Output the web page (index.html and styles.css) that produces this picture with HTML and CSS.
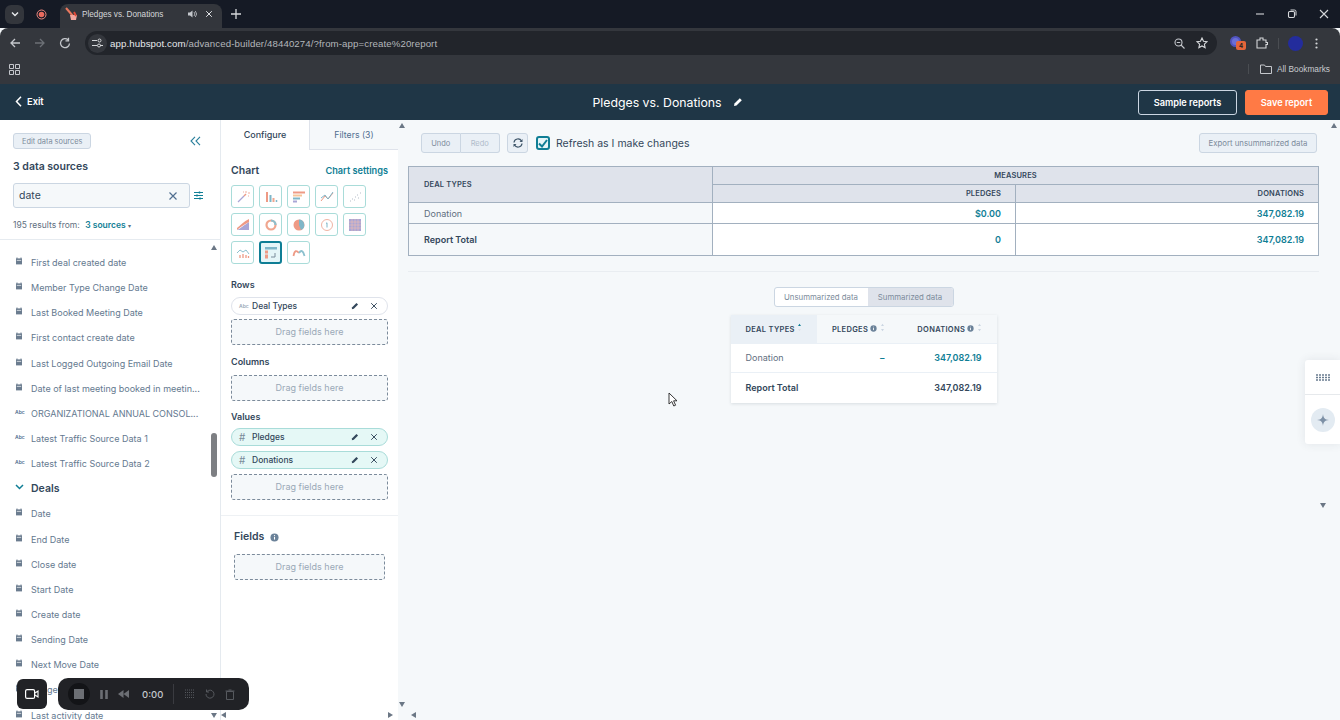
FILE: index.html
```html
<!DOCTYPE html>
<html lang="en">
<head>
<meta charset="utf-8">
<title>Pledges vs. Donations</title>
<link rel="stylesheet" href="styles.css">
</head>
<body>
<svg class="defs" width="0" height="0">
  <defs>
    <symbol id="cal" viewBox="0 0 8 8"><path d="M1 1.400h6v6H1z" fill="#6b7c8f"/><path d="M2 .5v1.400M6 .5v1.400" stroke="#6b7c8f"/><path d="M1.800 3.400h4.400" stroke="#e6eaee" stroke-width=".8"/></symbol>
    <symbol id="x" viewBox="0 0 10 10"><path d="M1.500 1.500l7 7M8.500 1.500l-7 7" stroke="currentColor" stroke-width="1.200" fill="none"/></symbol>
    <symbol id="pen" viewBox="0 0 10 10"><path d="M1 9l.5-2.500L6.800 1.200l2 2L3.500 8.500z" fill="currentColor"/></symbol>
    <symbol id="info" viewBox="0 0 10 10"><circle cx="5" cy="5" r="4.500" fill="#6b8299"/><path d="M5 4.300v3" stroke="#fff" stroke-width="1.200"/><circle cx="5" cy="2.800" r=".7" fill="#fff"/></symbol>
    <symbol id="sort" viewBox="0 0 6 12"><path d="M3 1l2 3H1zM3 11L1 8h4z" fill="#cbd6e2"/></symbol>
  </defs>
</svg>

<div class="tabstrip">
  <span class="tab-menu"><svg width="8" height="6" viewBox="0 0 8 6"><path d="M1 1.500l3 3 3-3" stroke="#e8eaed" stroke-width="1.400" fill="none"/></svg></span>
  <svg class="rec-dot" width="11" height="11" viewBox="0 0 11 11"><circle cx="5.500" cy="5.500" r="4.500" fill="none" stroke="#f28b82"/><circle cx="5.500" cy="5.500" r="2.800" fill="#ea6a5e"/></svg>
  <div class="tab">
    <svg width="14" height="14" viewBox="0 0 14 14"><path d="M1 1l7 8" stroke="#e9785f" stroke-width="2"/><path d="M5 8h7l-1 5H6z" fill="#f2a7a0"/><path d="M9 5l2 4" stroke="#e24b3a" stroke-width="2"/></svg>
    <span class="tab-title">Pledges vs. Donations</span>
    <svg class="tab-sound" width="10" height="10" viewBox="0 0 10 10"><path d="M1 3.500h2L5.500 1.500v7L3 6.500H1z" fill="#c4c7cc"/><path d="M7 3a3 3 0 0 1 0 4M8.300 2a4.500 4.500 0 0 1 0 6" stroke="#c4c7cc" stroke-width=".8" fill="none"/></svg>
    <svg class="tab-close" width="8" height="8"><use href="#x"/></svg>
  </div>
  <svg class="tab-new" width="10" height="10" viewBox="0 0 10 10"><path d="M5 0v10M0 5h10" stroke="#d5d7da" stroke-width="1.300"/></svg>
  <div class="window-controls">
    <svg width="10" height="10" viewBox="0 0 10 10"><path d="M1 5h8" stroke="#d5d7da" stroke-width="1.100"/></svg>
    <svg width="10" height="10" viewBox="0 0 10 10"><rect x="1.500" y="2.500" width="6" height="6" rx="1.200" fill="none" stroke="#d5d7da" stroke-width="1.100"/><path d="M3.500 1h4a1.500 1.500 0 0 1 1.500 1.500v4" fill="none" stroke="#d5d7da"/></svg>
    <svg width="10" height="10" viewBox="0 0 10 10"><path d="M1 1l8 8M9 1L1 9" stroke="#d5d7da" stroke-width="1.100"/></svg>
  </div>
</div>

<div class="toolbar">
  <svg class="tb-ic" width="12" height="12" viewBox="0 0 12 12"><path d="M11 6H2M6 2L2 6l4 4" stroke="#c4c7cc" stroke-width="1.300" fill="none"/></svg>
  <svg class="tb-ic" width="12" height="12" viewBox="0 0 12 12"><path d="M1 6h9M6 2l4 4-4 4" stroke="#6c7076" stroke-width="1.300" fill="none"/></svg>
  <svg class="tb-ic" width="12" height="12" viewBox="0 0 12 12"><path d="M10.500 6.500A4.500 4.500 0 1 1 9 2.800M9.500 .8v3h-3" stroke="#c4c7cc" stroke-width="1.300" fill="none"/></svg>
  <div class="omnibox">
    <span class="site-ic"><svg width="11" height="10" viewBox="0 0 11 10"><path d="M0 2.500h5M8 7.500h3M0 7.500h5" stroke="#d5d7da"/><circle cx="7.500" cy="2.500" r="1.500" fill="none" stroke="#d5d7da"/><circle cx="7" cy="7.500" r="1.500" fill="none" stroke="#d5d7da"/></svg></span>
    <span class="url">app.hubspot.com<span class="url-dim">/advanced-builder/48440274/?from-app=create%20report</span></span>
    <span class="omni-right">
      <svg width="11" height="11" viewBox="0 0 11 11"><circle cx="4.500" cy="4.500" r="3.500" fill="none" stroke="#c4c7cc" stroke-width="1.100"/><path d="M7 7l3.500 3.500M2.800 4.500h3.400" stroke="#c4c7cc" stroke-width="1.100"/></svg>
      <svg width="12" height="12" viewBox="0 0 12 12"><path d="M6 1l1.500 3.300 3.500.4-2.600 2.400.7 3.500L6 8.900l-3.100 1.700.7-3.500L1 4.700l3.500-.4z" fill="none" stroke="#d5d7da" stroke-width="1.100"/></svg>
    </span>
  </div>
  <div class="ext">
    <span class="ext-badge-wrap"><span class="ext-round"></span><span class="ext-badge">4</span></span>
    <svg width="12" height="12" viewBox="0 0 12 12"><path d="M1 3h3V1h3v2h3v2.500h1.500v2H10V11H1z" fill="none" stroke="#d5d7da" stroke-width="1.100"/></svg>
    <span class="ext-sep"></span>
    <span class="avatar"></span>
    <svg width="3" height="11" viewBox="0 0 3 11"><circle cx="1.500" cy="1.500" r="1.100" fill="#d5d7da"/><circle cx="1.500" cy="5.500" r="1.100" fill="#d5d7da"/><circle cx="1.500" cy="9.500" r="1.100" fill="#d5d7da"/></svg>
  </div>
</div>

<div class="bookmarks">
  <svg width="11" height="11" viewBox="0 0 11 11"><path d="M.5.500h4v4h-4zM6.500.500h4v4h-4zM.5 6.500h4v4h-4zM6.500 6.500h4v4h-4z" fill="none" stroke="#c4c7cc"/></svg>
  <span class="bm-right">
    <span class="bm-sep"></span>
    <svg width="12" height="10" viewBox="0 0 12 10"><path d="M.5 1h4l1 1.500h6v7H.5z" fill="none" stroke="#c4c7cc"/></svg>
    <span>All Bookmarks</span>
  </span>
</div>

<header class="appbar">
  <a class="exit"><svg width="7" height="11" viewBox="0 0 7 11"><path d="M6 .8L1.500 5.500 6 10.200" stroke="#fff" stroke-width="1.500" fill="none"/></svg>Exit</a>
  <div class="report-title">Pledges vs. Donations
    <svg width="10" height="10" class="title-pen"><use href="#pen"/></svg>
  </div>
  <div class="appbar-actions">
    <button class="btn-outline">Sample reports</button>
    <button class="btn-save">Save report</button>
  </div>
</header>

<main class="builder">
  <aside class="sources">
    <div class="sources-head">
      <div class="edit-row">
        <button class="btn-mini">Edit data sources</button>
        <svg width="11" height="10" viewBox="0 0 11 10"><path d="M5 .8L1 5l4 4.200M10 .8L6 5l4 4.200" stroke="#2a7f9c" stroke-width="1.100" fill="none"/></svg>
      </div>
      <h2 class="sources-count">3 data sources</h2>
      <div class="search-row">
        <div class="search"><span>date</span><svg width="10" height="10" class="search-x"><use href="#x"/></svg></div>
        <svg width="9" height="9" viewBox="0 0 9 9"><path d="M0 1.500h9M0 4.500h9M0 7.500h9" stroke="#0f7e95"/><path d="M5.500.5v2M3 3.500v2M6 6.500v2" stroke="#0f7e95" stroke-width="1.400"/></svg>
      </div>
      <div class="results">195 results from: <b>3 sources</b> <span class="caret">▾</span></div>
    </div>
    <div class="field-list">
      <ul>
        <li><svg width="8" height="8"><use href="#cal"/></svg>First deal created date</li>
        <li><svg width="8" height="8"><use href="#cal"/></svg>Member Type Change Date</li>
        <li><svg width="8" height="8"><use href="#cal"/></svg>Last Booked Meeting Date</li>
        <li><svg width="8" height="8"><use href="#cal"/></svg>First contact create date</li>
        <li><svg width="8" height="8"><use href="#cal"/></svg>Last Logged Outgoing Email Date</li>
        <li><svg width="8" height="8"><use href="#cal"/></svg>Date of last meeting booked in meetin...</li>
        <li><span class="abc">Abc</span>ORGANIZATIONAL ANNUAL CONSOL...</li>
        <li><span class="abc">Abc</span>Latest Traffic Source Data 1</li>
        <li><span class="abc">Abc</span>Latest Traffic Source Data 2</li>
        <li class="group"><svg width="9" height="6" viewBox="0 0 9 6"><path d="M1 1l3.500 3.500L8 1" stroke="#0f7e95" stroke-width="1.500" fill="none"/></svg>Deals</li>
        <li><svg width="8" height="8"><use href="#cal"/></svg>Date</li>
        <li><svg width="8" height="8"><use href="#cal"/></svg>End Date</li>
        <li><svg width="8" height="8"><use href="#cal"/></svg>Close date</li>
        <li><svg width="8" height="8"><use href="#cal"/></svg>Start Date</li>
        <li><svg width="8" height="8"><use href="#cal"/></svg>Create date</li>
        <li><svg width="8" height="8"><use href="#cal"/></svg>Sending Date</li>
        <li><svg width="8" height="8"><use href="#cal"/></svg>Next Move Date</li>
        <li><svg width="8" height="8"><use href="#cal"/></svg>Lodge Date</li>
        <li><svg width="8" height="8"><use href="#cal"/></svg>Last activity date</li>
      </ul>
      <span class="arrow up list-up"></span>
      <span class="list-thumb"></span>
      <span class="arrow down list-down"></span>
    </div>
  </aside>

  <section class="config">
    <div class="config-panel">
      <div class="tabs"><div class="tab-active">Configure</div><div class="tab-idle">Filters (3)</div></div>
      <div class="config-body">
        <div class="chart-head"><h3>Chart</h3><a>Chart settings</a></div>
        <div class="chart-grid">
          <span class="ct"><svg width="14" height="14" viewBox="0 0 14 14"><path d="M2 12l6-6" stroke="#a9a6d6" stroke-width="1.300"/><path d="M8 6l2-2" stroke="#ee9a85" stroke-width="1.500"/><path d="M10 1v2M12 3h2M12 6h1M7 2h1" stroke="#ee9a85" stroke-width=".8"/></svg></span>
          <span class="ct"><svg width="14" height="14" viewBox="0 0 14 14"><path d="M3 2v10" stroke="#ee9a85" stroke-width="2"/><path d="M6.500 5v7" stroke="#7fb6c8" stroke-width="2"/><path d="M9.500 8v4" stroke="#f0a68f" stroke-width="2"/><path d="M12.500 10v2" stroke="#7fb6c8" stroke-width="1.500"/></svg></span>
          <span class="ct"><svg width="14" height="14" viewBox="0 0 14 14"><path d="M1 2.500h12" stroke="#ee9a85" stroke-width="2"/><path d="M1 5.500h9" stroke="#f6c69a" stroke-width="2"/><path d="M1 8.500h7" stroke="#7fb6c8" stroke-width="2"/><path d="M1 11.500h4" stroke="#a9a6d6" stroke-width="2"/></svg></span>
          <span class="ct"><svg width="14" height="14" viewBox="0 0 14 14"><path d="M1 11l4-5 3 3 5-6" stroke="#ee9a85" fill="none"/><path d="M1 8l4-3 3 4 5-7" stroke="#7fb6c8" fill="none"/></svg></span>
          <span class="ct"><svg width="14" height="14" viewBox="0 0 14 14"><path d="M2 11h1M4 9h1M6 10h1M7 7h1M9 5h1M10 8h1M12 3h1" stroke="#b5bdc8" stroke-dasharray="1 1"/></svg></span>
          <span class="ct"><svg width="14" height="14" viewBox="0 0 14 14"><path d="M1 12c3-1 7-5 12-8v8z" fill="#a9a6d6"/><path d="M1 10c3-2 7-7 12-9v3C8 7 4 9 1 12z" fill="#ee9a85"/></svg></span>
          <span class="ct"><svg width="14" height="14" viewBox="0 0 14 14"><circle cx="7" cy="7" r="4.500" fill="none" stroke="#f0a68f" stroke-width="2.200"/><path d="M7 2.500A4.500 4.500 0 0 1 11.500 7" fill="none" stroke="#8cc0ce" stroke-width="2.200"/></svg></span>
          <span class="ct"><svg width="14" height="14" viewBox="0 0 14 14"><circle cx="7" cy="7" r="5.500" fill="#ee9a85"/><path d="M7 7V1.500A5.500 5.500 0 0 1 9 12z" fill="#7fb6c8"/></svg></span>
          <span class="ct"><svg width="14" height="14" viewBox="0 0 14 14"><circle cx="7" cy="7" r="5.500" fill="none" stroke="#f0b4a4"/><path d="M6 5.500L7 4.800V9.500" stroke="#7fb6c8" fill="none"/></svg></span>
          <span class="ct"><svg width="14" height="14" viewBox="0 0 14 14"><rect x="1" y="1" width="12" height="12" fill="#a9a6d6"/><path d="M1 4h12M1 7h12M1 10h12M4 1v12M7 1v12M10 1v12" stroke="#f3c0b0" stroke-width=".6"/></svg></span>
          <span class="ct"><svg width="14" height="14" viewBox="0 0 14 14"><path d="M1 7l3-3 3 2 3-2 3 4" stroke="#8cc0ce" fill="none"/><path d="M4 12v-3M7 12V8M10 12V9M12.500 12v-2" stroke="#ee9a85" stroke-width="1.300"/></svg></span>
          <span class="ct ct-on"><svg width="14" height="14" viewBox="0 0 14 14"><rect x="1" y="1" width="12" height="2.500" fill="#7fb6c8"/><rect x="1" y="4.500" width="3" height="3" fill="#ee9a85"/><rect x="1" y="8.500" width="3" height="4" fill="#ee9a85"/><path d="M7 11h4V7" stroke="#7a8b9a" fill="none"/></svg></span>
          <span class="ct"><svg width="14" height="14" viewBox="0 0 14 14"><path d="M1.500 10c1-6 3-6 5.500-3" stroke="#ee9a85" stroke-width="1.800" fill="none"/><path d="M7 7c2-3 4-3 5.500 3" stroke="#8cc0ce" stroke-width="1.800" fill="none"/></svg></span>
        </div>

        <h4>Rows</h4>
        <div class="pill"><span class="abc pill-ic">Abc</span><span class="pill-name">Deal Types</span><svg width="8" height="8"><use href="#pen"/></svg><svg width="8" height="8"><use href="#x"/></svg></div>
        <div class="drop">Drag fields here</div>

        <h4 class="h-columns">Columns</h4>
        <div class="drop">Drag fields here</div>

        <h4 class="h-values">Values</h4>
        <div class="pill pill-val"><span class="pill-ic hash">#</span><span class="pill-name">Pledges</span><svg width="8" height="8"><use href="#pen"/></svg><svg width="8" height="8"><use href="#x"/></svg></div>
        <div class="pill pill-val"><span class="pill-ic hash">#</span><span class="pill-name">Donations</span><svg width="8" height="8"><use href="#pen"/></svg><svg width="8" height="8"><use href="#x"/></svg></div>
        <div class="drop">Drag fields here</div>
      </div>
      <div class="fields-card">
        <h3>Fields <svg width="9" height="9"><use href="#info"/></svg></h3>
        <div class="drop">Drag fields here</div>
      </div>
    </div>
    <span class="arrow up cfg-up"></span>
    <span class="arrow down cfg-down"></span>
    <span class="arrow left cfg-left"></span>
    <span class="arrow right cfg-right"></span>
  </section>

  <section class="canvas">
    <div class="canvas-top">
      <div class="undo-group"><button>Undo</button><button class="redo">Redo</button></div>
      <button class="refresh"><svg width="10" height="10" viewBox="0 0 10 10"><path d="M1 4.500A4 4 0 0 1 8.500 3M9 5.500A4 4 0 0 1 1.500 7" stroke="#3e5569" stroke-width="1.200" fill="none"/><path d="M9.500 1v3h-3M.5 9V6h3" fill="#3e5569"/></svg></button>
      <span class="check"><svg width="10" height="9" viewBox="0 0 10 9"><path d="M1 4.500l3 3 5-6.500" stroke="#0f7e95" stroke-width="2" fill="none"/></svg></span>
      <span class="check-label">Refresh as I make changes</span>
      <button class="btn-export">Export unsummarized data</button>
    </div>

    <table class="pivot">
      <colgroup><col class="c1"><col class="c2"><col class="c3"></colgroup>
      <tr class="h1"><th rowspan="2" class="left">DEAL TYPES</th><th colspan="2" class="center">MEASURES</th></tr>
      <tr class="h2"><th>PLEDGES</th><th>DONATIONS</th></tr>
      <tr class="r1"><td class="left">Donation</td><td class="link">$0.00</td><td class="link">347,082.19</td></tr>
      <tr class="r2"><td class="left strong">Report Total</td><td class="link">0</td><td class="link">347,082.19</td></tr>
    </table>

    <div class="summary-zone">
      <div class="toggle"><span>Unsummarized data</span><span class="toggle-on">Summarized data</span></div>
      <table class="summary">
        <colgroup><col class="s1"><col class="s2"><col class="s3"></colgroup>
        <tr class="s-head">
          <th class="s-sorted">DEAL TYPES <svg width="5" height="9" viewBox="0 0 6 12"><path d="M3 1l2 3H1z" fill="#0f7e95"/><path d="M3 11L1 8h4z" fill="#dfe3eb"/></svg></th>
          <th class="num mid">PLEDGES <svg width="7" height="7"><use href="#info"/></svg> <svg width="5" height="9"><use href="#sort"/></svg></th>
          <th class="num">DONATIONS <svg width="7" height="7"><use href="#info"/></svg> <svg width="5" height="9"><use href="#sort"/></svg></th>
        </tr>
        <tr class="s-row"><td>Donation</td><td class="num mid link">–</td><td class="num link">347,082.19</td></tr>
        <tr class="s-row s-total"><td>Report Total</td><td class="num mid"></td><td class="num">347,082.19</td></tr>
      </table>
    </div>
    <svg class="cursor" width="10" height="15" viewBox="0 0 10 15"><path d="M1 1v11l2.800-2.500L5.800 14l1.800-.8-2-4.400H9z" fill="#fff" stroke="#222" stroke-width=".9"/></svg>
  </section>
</main>

<div class="side-widget">
  <div class="sw-top"><svg width="14" height="7" viewBox="0 0 14 7"><path d="M0 1h14M0 3.500h14M0 6h14" stroke="#6a7c90" stroke-width="1.500" stroke-dasharray="2 1"/></svg></div>
  <div class="sw-bot"><span class="sw-circle"><svg width="12" height="12" viewBox="0 0 12 12"><path d="M6 0c.5 4 1.500 5.500 6 6-4.500.5-5.500 2-6 6-.5-4-1.500-5.500-6-6 4.500-.5 5.500-2 6-6z" fill="#7d90a6"/></svg></span></div>
</div>
<span class="arrow up page-up"></span>
<span class="arrow down page-down"></span>
<span class="arrow left canvas-left"></span>

<div class="recorder">
  <div class="rec-cam"><svg width="14" height="10" viewBox="0 0 14 10"><rect x=".6" y=".6" width="9" height="8.800" rx="1.500" fill="none" stroke="#fff" stroke-width="1.200"/><path d="M10 4l3-2v6l-3-2" fill="none" stroke="#fff" stroke-width="1.100"/></svg></div>
  <div class="rec-bar">
    <span class="rec-stop"><i></i></span>
    <svg width="8" height="9" viewBox="0 0 8 9"><path d="M1.500 0v9M6.500 0v9" stroke="#6c6f74" stroke-width="2.600"/></svg>
    <svg width="11" height="8" viewBox="0 0 11 8"><path d="M5.500 0v8L0 4zM11 0v8L5.500 4z" fill="#6c6f74"/></svg>
    <span class="rec-time">0:00</span>
    <span class="rec-sep"></span>
    <svg width="11" height="11" viewBox="0 0 11 11"><path d="M1 1h9M1 3.500h9M1 6h9M1 8.500h9" stroke="#56595e" stroke-dasharray="1 1"/></svg>
    <svg width="10" height="10" viewBox="0 0 10 10"><path d="M2 2.500A4 4 0 1 1 1 5M1.500 .5v2.500H4" stroke="#56595e" fill="none"/></svg>
    <svg width="10" height="11" viewBox="0 0 10 11"><path d="M1.500 2.500h7v8h-7zM.5 2h9M3.500 1h3" stroke="#56595e" fill="none"/></svg>
  </div>
</div>
</body>
</html>
```
FILE: styles.css
```css
* { box-sizing: border-box; }
html, body { margin: 0; height: 720px; overflow: hidden; }
body { font-family: "Inter", "Liberation Sans", sans-serif; font-size: 9px; color: #33475b; background: #f5f8fa; position: relative; }
.defs { position: absolute; }
button { font-family: inherit; cursor: default; }
h2, h3, h4, ul { margin: 0; padding: 0; }
ul { list-style: none; }

.tabstrip { height: 28px; background: #151a25; display: flex; align-items: center; padding: 4px 0 0 5px; color: #d5d7da; }
.tab-menu { width: 19px; height: 19px; margin-top: -4px; border-radius: 6px; background: #33363c; display: flex; align-items: center; justify-content: center; }
.rec-dot { margin: -4px 0 0 12px; }
.tab { width: 162px; height: 24px; margin-left: 13px; padding: 0 9px 4px 5px; background: #33363c; border-radius: 8px 8px 0 0; display: flex; align-items: center; gap: 3px; font-size: 8.200px; font-family: "Liberation Sans", sans-serif; }
.tab-title { flex: 1; white-space: nowrap; }
.tab-sound { margin-right: 3px; }
.tab-close { color: #e8eaed; margin-left: 2px; }
.tab-new { margin: -4px 0 0 9px; }
.window-controls { margin-left: auto; display: flex; gap: 22px; padding-right: 11px; margin-top: -4px; }

.toolbar { height: 30px; background: #34373d; border-radius: 8px 8px 0 0; display: flex; align-items: center; padding: 0 9px 0 9px; gap: 13px; }
.omnibox { margin-left: 1px; flex: 0 0 1132px; height: 24px; background: #22252b; border-radius: 12px; display: flex; align-items: center; padding: 0 9px 0 3px; color: #fff; }
.site-ic { width: 19px; height: 19px; border-radius: 50%; background: #34373d; display: flex; align-items: center; justify-content: center; }
.url { margin-left: 3px; font-size: 9.680px; letter-spacing: .01em; font-family: "Liberation Sans", sans-serif; color: #e8eaed; }
.url-dim { color: #b4b7bb; }
.omni-right { margin-left: auto; display: flex; gap: 11px; align-items: center; }
.ext { display: flex; align-items: center; gap: 12px; }
.ext-badge-wrap { position: relative; width: 14px; height: 14px; }
.ext-round { display: block; width: 11px; height: 11px; border-radius: 50%; background: #6b6fd6; border: 2px solid #5154c0; }
.ext-badge { position: absolute; left: 6px; top: 5px; width: 10px; height: 9px; border-radius: 2px; background: #e5653a; color: #222; font-size: 6px; font-weight: 700; text-align: center; line-height: 9px; }
.ext-sep { width: 1px; height: 11px; background: #4a4d52; margin: 0 -3px 0 -2px; }
.avatar { width: 15px; height: 15px; border-radius: 50%; background: #232c9c; }

.bookmarks { height: 26px; background: #34373d; display: flex; align-items: center; padding: 0 10px 4px 9px; }
.bm-right { margin-left: auto; display: flex; align-items: center; gap: 5px; font-size: 8.300px; color: #c9cbcf; font-family: "Liberation Sans", sans-serif; }
.bm-sep { width: 1px; height: 10px; background: #4a4d52; margin-right: 6px; }

.appbar { height: 36px; background: #1f3646; display: grid; grid-template-columns: 1fr auto 1fr; align-items: center; padding: 0 12px 0 15px; color: #fff; }
.exit { display: flex; align-items: center; gap: 5px; font-weight: 600; font-size: 9.300px; margin-top: -2px; }
.report-title { font-size: 12.300px; display: flex; align-items: center; gap: 11px; margin-left: -8px; }
.title-pen { color: #fff; }
.appbar-actions { display: flex; justify-content: flex-end; gap: 8px; }
.btn-outline, .btn-save { height: 25px; border-radius: 3px; font-size: 9.200px; font-weight: 600; color: #fff; }
.btn-outline { width: 99px; background: #1f3646; border: 1px solid #cbd6e2; }
.btn-save { width: 83px; background: #ff7a45; border: 1px solid #ff7a45; }

.builder { height: 600px; display: flex; overflow: hidden; }

.sources { width: 221px; flex: none; background: #fff; border-right: 1px solid #e5eaef; display: flex; flex-direction: column; }
.sources-head { height: 120px; padding: 13px 13px 0 13px; border-bottom: 1px solid #e6ebf0; flex: none; }
.edit-row { display: flex; justify-content: space-between; align-items: center; padding-right: 6px; }
.btn-mini { height: 16px; padding: 0 8px; font-size: 7.400px; color: #7c8b9b; background: #eaf0f6; border: 1px solid #cbd6e2; border-radius: 3px; }
.sources-count { margin-top: 10px; font-size: 10.500px; font-weight: 600; color: #33475b; line-height: 16px; }
.search-row { margin-top: 8px; display: flex; align-items: center; gap: 4px; }
.search { width: 177px; height: 25px; padding: 0 11px 0 5px; background: #f5f8fa; border: 1px solid #cbd6e2; border-radius: 3px; display: flex; justify-content: space-between; align-items: center; font-size: 10.500px; color: #33475b; }
.search-x { color: #516f90; }
.results { margin-top: 11px; font-size: 8.500px; color: #5f6f7f; line-height: 12px; }
.results b { margin-left: 3px; color: #0f7e95; font-weight: 600; }
.caret { font-size: 6px; }

.field-list { position: relative; flex: 1; overflow: hidden; padding: 10px 0 0 15px; }
.field-list li { height: 25.150px; display: flex; align-items: center; gap: 8px; font-size: 9px; color: #64798f; white-space: nowrap; }
.field-list li > svg:first-child { flex: none; margin-top: -3px; }
.abc { width: 8px; font-size: 5px; font-weight: 600; color: #516f90; flex: none; margin-top: -3px; }
.field-list li.group { font-size: 10.500px; font-weight: 600; color: #33475b; gap: 7px; }
.arrow { position: absolute; width: 0; height: 0; border: 3.500px solid transparent; }
.arrow.up { border-top: 0; border-bottom: 5px solid #6b7785; }
.arrow.down { border-bottom: 0; border-top: 5px solid #6b7785; }
.arrow.left { border-left: 0; border-right: 5px solid #6b7785; }
.arrow.right { border-right: 0; border-left: 5px solid #6b7785; }
.list-up { left: 211px; top: 5px; }
.list-down { left: 211px; top: 473px; }
.list-thumb { position: absolute; left: 211px; top: 193px; width: 6px; height: 44px; border-radius: 3px; background: #7d7f83; }

.config { width: 187px; position: relative; background: #f5f8fa; flex: none; }
.config-panel { width: 177px; height: 600px; background: #fff; }
.tabs { display: flex; height: 30px; }
.tab-active { width: 88px; text-align: center; line-height: 30px; font-size: 9px; color: #33475b; font-weight: 500; }
.tab-idle { flex: 1; text-align: center; line-height: 30px; font-size: 8.700px; color: #516f90; background: #f5f8fa; border-left: 1px solid #dfe3eb; border-bottom: 1px solid #dfe3eb; }
.config-body { height: 366px; padding: 12px 10px 0 10px; border-bottom: 1px solid #eef1f4; }
.chart-head { display: flex; justify-content: space-between; align-items: center; height: 16px; }
.chart-head h3 { font-size: 10.500px; font-weight: 600; color: #33475b; }
.chart-head a { font-size: 9.200px; font-weight: 600; color: #0f7e95; }
.chart-grid { margin: 7px 0 15px; display: grid; grid-template-columns: repeat(5, 23px); grid-auto-rows: 23px; gap: 5px; }
.ct { background: #fff; border: 1px solid #a9dcd9; border-radius: 3px; display: flex; align-items: center; justify-content: center; }
.ct-on { border: 2px solid #0f7e95; background: #e5f5f8; }
.config-body h4 { margin: 11px 0 6px; font-size: 9px; font-weight: 600; color: #33475b; line-height: 12px; }
.config-body h4.h-columns { margin-bottom: 7px; }
.config-body h4.h-values { margin: 10px 0 5px; }
.pill { height: 18px; padding: 0 9px 0 7px; background: #fff; border: 1px solid #dfe3eb; border-radius: 9px; display: flex; align-items: center; gap: 11px; color: #33475b; margin-bottom: 4px; }
.pill-val { background: #e5f8f6; border-color: #a9dcd9; margin-bottom: 5px; }
.pill-ic { margin: 0 -6px 0 0; width: 8px; color: #9aa8b7; }
.hash { font-size: 10px; color: #7a8b9a; font-weight: 400; }
.pill-name { flex: 1; font-size: 8.500px; font-weight: 500; }
.drop { height: 26px; border: 1px dashed #7c8b9b; border-radius: 3px; background: #f5f8fa; color: #9aa8b7; font-size: 9px; text-align: center; line-height: 24px; }
.fields-card { padding: 13px 13px 0 13px; }
.fields-card h3 { display: flex; align-items: center; gap: 6px; font-size: 10.500px; font-weight: 600; color: #33475b; margin-bottom: 9px; line-height: 16px; }
.cfg-up { left: 178px; top: 3px; }
.cfg-down { left: 178px; top: 582px; }
.cfg-left { left: 0; top: 592px; }
.cfg-right { left: 167px; top: 592px; }

.canvas { flex: none; width: 932px; position: relative; padding: 0 21px 0 0; background: #f5f8fa; }
.canvas-top { height: 46px; padding: 13px 2px 0 13px; display: flex; align-items: flex-start; }
.undo-group { display: flex; height: 20px; }
.undo-group button { width: 39.500px; height: 20px; background: #eaf0f6; border: 1px solid #cbd6e2; font-size: 7.500px; color: #7c8b9b; border-radius: 3px 0 0 3px; padding: 0; }
.undo-group .redo { border-left: 0; border-radius: 0 3px 3px 0; color: #b0bccb; }
.refresh { margin-left: 7px; width: 21px; height: 20px; background: #eaf0f6; border: 1px solid #cbd6e2; border-radius: 3px; padding: 0; display: flex; align-items: center; justify-content: center; }
.check { margin: 3px 0 0 8px; width: 14px; height: 14px; border: 2px solid #0f7e95; border-radius: 3px; background: #e5f5f8; display: flex; align-items: center; justify-content: center; }
.check-label { margin: 4px 0 0 6px; font-size: 10.500px; color: #33475b; line-height: 14px; }
.btn-export { margin-left: auto; height: 20px; width: 118px; padding: 0; background: #eaf0f6; border: 1px solid #cbd6e2; border-radius: 3px; font-size: 7.800px; color: #7c8b9b; }

.pivot { width: 910px; table-layout: fixed; border-collapse: collapse; font-size: 9px; }
.c1 { width: 304px; } .c2 { width: 303px; } .c3 { width: 303px; }
.pivot th, .pivot td { border: 1px solid #a2b0bf; padding: 0 14px; text-align: right; }
.pivot th { background: #dfe3eb; font-size: 7.500px; font-weight: 600; color: #33475b; letter-spacing: .02em; }
.pivot th.left, .pivot td.left { text-align: left; padding-left: 15px; }
.pivot td.left { background: #f5f8fa; color: #5f6f7f; }
.pivot th.center { text-align: center; }
.h1 { height: 18px; } .h2 { height: 18px; } .r1 { height: 21px; } .r2 { height: 32px; }
.pivot td { background: #fff; }
.pivot td.link { color: #0f7e95; font-weight: 600; }
.pivot td.strong { font-weight: 600; color: #33475b; }

.summary-zone { margin-top: 15px; border-top: 1px solid #e9edf1; padding-top: 15px; display: flex; flex-direction: column; align-items: center; }
.toggle { display: flex; height: 20px; border: 1px solid #cbd6e2; border-radius: 3px; font-size: 7.800px; color: #7c8b9b; overflow: hidden; background: #fff; }
.toggle span { width: 93px; text-align: center; line-height: 18px; }
.toggle .toggle-on { width: 85px; background: #dfe3eb; }
.summary { margin-top: 8px; width: 266px; table-layout: fixed; border-collapse: collapse; background: #fff; box-shadow: 0 1px 3px rgba(45,62,80,.14); font-size: 9px; }
.s1 { width: 86px; } .s2 { width: 70px; } .s3 { width: 110px; }
.s-head th { height: 28px; background: #f5f8fa; font-size: 7.500px; font-weight: 600; color: #33475b; text-align: left; padding: 0 0 0 15px; letter-spacing: .04em; white-space: nowrap; }
.s-head th.s-sorted { background: #eaf0f6; }
.s-head th.num { text-align: right; padding: 0 15px 0 0; }
.s-head th.num.mid { padding-right: 2px; }
.s-row { height: 29px; }
.s-total { height: 31px; }
.s-row td { padding: 0 0 0 15px; border-top: 1px solid #eaf0f6; color: #5f6f7f; }
.s-row td.num { text-align: right; padding: 0 15px 0 0; font-weight: 600; color: #33475b; }
.s-row td.num.link { color: #0f7e95; }
.s-row td.num.mid { padding-right: 2px; }
.s-total td:first-child { font-weight: 600; color: #33475b; }
.cursor { position: absolute; left: 260px; top: 272px; }

.side-widget { position: absolute; right: 0; top: 360px; width: 35px; height: 84px; background: #fff; border-radius: 3px 0 0 3px; box-shadow: 0 0 10px rgba(45,62,80,.1); }
.sw-top { height: 35px; border-bottom: 1px solid #e6e9ec; display: flex; align-items: center; justify-content: center; }
.sw-bot { height: 49px; display: flex; align-items: center; justify-content: center; }
.sw-circle { width: 24px; height: 24px; border-radius: 50%; background: #e3ebf2; display: flex; align-items: center; justify-content: center; }
.page-up { left: 1331px; top: 123px; }
.page-down { left: 1320px; top: 503px; }
.canvas-left { left: 411px; top: 712px; }

.recorder { position: absolute; left: 17px; top: 678px; display: flex; align-items: flex-start; gap: 11px; }
.rec-cam { width: 30px; height: 30px; margin-top: 1px; background: #212226; border-radius: 6px; display: flex; align-items: center; justify-content: center; }
.rec-bar { width: 191px; height: 32px; background: #212226; border-radius: 10px; display: flex; align-items: center; padding-left: 10px; gap: 10px; }
.rec-stop { width: 22px; height: 22px; background: #131417; border-radius: 50%; display: flex; align-items: center; justify-content: center; }
.rec-stop i { width: 10px; height: 10px; background: #6c6f74; display: block; }
.rec-time { font-size: 9.500px; font-weight: 500; color: #c4c7cc; margin-left: 3px; }
.rec-sep { width: 1px; height: 20px; background: #3a3b40; margin-right: 0; }
```
